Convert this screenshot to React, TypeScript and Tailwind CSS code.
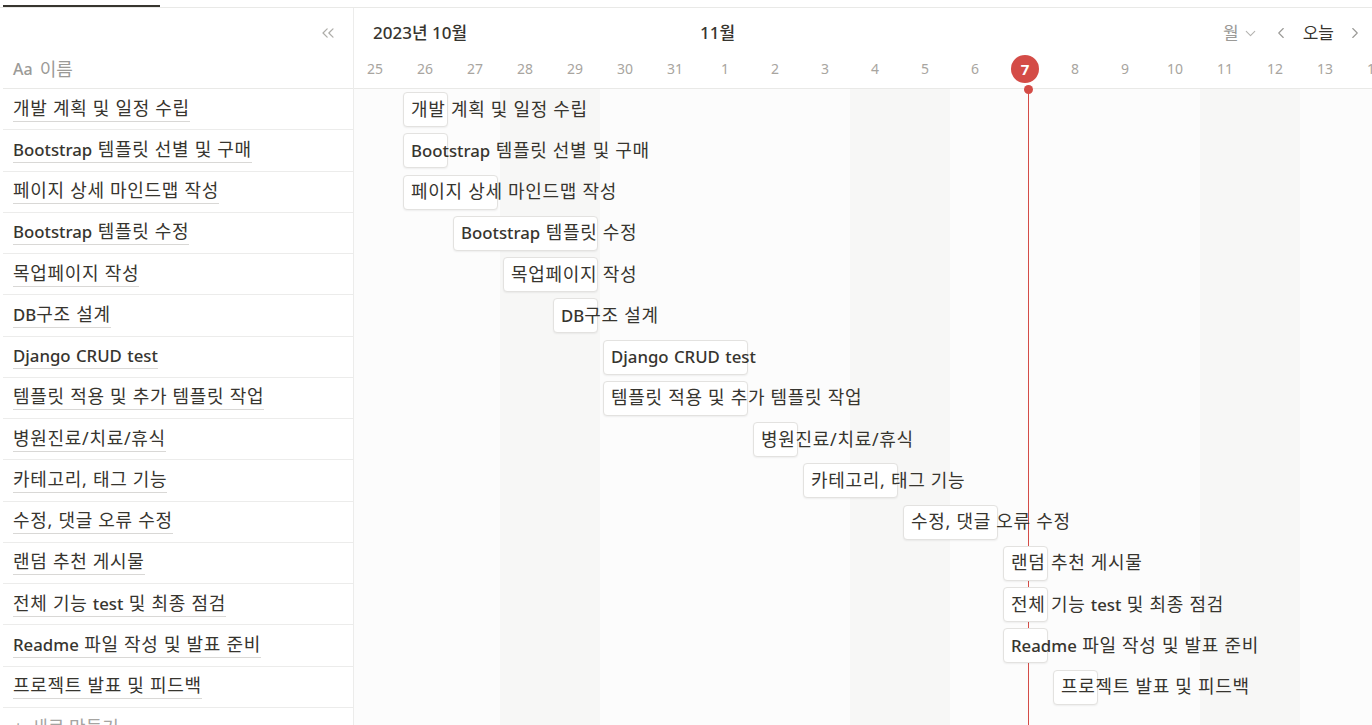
import { ChevronsLeft, ChevronDown, ChevronLeft, ChevronRight } from 'lucide-react';

const days = [25, 26, 27, 28, 29, 30, 31, 1, 2, 3, 4, 5, 6, 7, 8, 9, 10, 11, 12, 13, 14];
const weekends = [3, 4, 10, 11, 17, 18];
const todayIdx = 13;

interface Task {
  name: string;
  start: number;
  span: number;
}

const tasks: Task[] = [
  { name: '개발 계획 및 일정 수립', start: 1, span: 1 },
  { name: 'Bootstrap 템플릿 선별 및 구매', start: 1, span: 1 },
  { name: '페이지 상세 마인드맵 작성', start: 1, span: 2 },
  { name: 'Bootstrap 템플릿 수정', start: 2, span: 3 },
  { name: '목업페이지 작성', start: 3, span: 2 },
  { name: 'DB구조 설계', start: 4, span: 1 },
  { name: 'Django CRUD test', start: 5, span: 3 },
  { name: '템플릿 적용 및 추가 템플릿 작업', start: 5, span: 3 },
  { name: '병원진료/치료/휴식', start: 8, span: 1 },
  { name: '카테고리, 태그 기능', start: 9, span: 2 },
  { name: '수정, 댓글 오류 수정', start: 11, span: 2 },
  { name: '랜덤 추천 게시물', start: 13, span: 1 },
  { name: '전체 기능 test 및 최종 점검', start: 13, span: 1 },
  { name: 'Readme 파일 작성 및 발표 준비', start: 13, span: 1 },
  { name: '프로젝트 발표 및 피드백', start: 14, span: 1 },
];

// latin words render heavier and hangul wider in the original font
function Name({ text }: { text: string }) {
  const parts = text.split(/([A-Za-z]+)/);
  return (
    <>
      {parts.map((p, i) =>
        /^[A-Za-z]+$/.test(p) ? (
          <span key={i} className="font-medium text-[16.8px]">
            {p}
          </span>
        ) : (
          <span key={i} className="text-[18px] tracking-[0.7px]">
            {p}
          </span>
        )
      )}
    </>
  );
}

export default function App() {
  return (
    <div
      className="w-[1372px] h-[725px] overflow-hidden bg-white text-[#37352f] text-[16px]"
      style={{ fontFamily: '"Noto Sans", "Noto Sans CJK KR", sans-serif' }}
    >
      {/* top tab strip */}
      <div className="h-[8px] border-b border-[#e9e9e7] flex items-end">
        <div className="ml-[3px] w-[157px] h-[2px] bg-[#37352f]" />
      </div>

      <div className="flex h-[717px]">
        {/* left panel */}
        <div className="w-[354px] shrink-0 border-r border-[#ececeb] flex flex-col">
          <div className="ml-[3px] h-[81px] shrink-0 border-b border-[#e9e9e7] flex flex-col">
            <div className="h-[49px] flex items-center justify-end pr-[15px]">
              <ChevronsLeft className="w-[20px] h-[20px] text-[#aeada9]" strokeWidth={1.5} />
            </div>
            <div className="flex items-center pl-[10px] text-[#9b9a97] gap-[7px] h-[24px]">
              <span className="font-medium text-[16px]">Aa</span>
              <span className="text-[18px]">이름</span>
            </div>
          </div>
          {tasks.map((t) => (
            <div
              key={t.name}
              className="ml-[3px] h-[41.25px] shrink-0 border-b border-[#ececeb] flex items-center pl-[10px]"
            >
              <span className="leading-[23px] border-b border-[#d9d8d6] whitespace-nowrap">
                <Name text={t.name} />
              </span>
            </div>
          ))}
          <div className="ml-[3px] shrink-0 flex items-center pl-[10px] pt-[6px] text-[#a5a4a1] gap-[8px] text-[18px]">
            <span>+</span>
            <span>새로 만들기</span>
          </div>
        </div>

        {/* timeline */}
        <div className="flex-1 overflow-hidden flex flex-col">
          <div className="h-[81px] border-b border-[#e9e9e7] flex flex-col shrink-0">
            <div className="h-[48px] flex items-center pt-[2px]">
              <div className="w-[346px] pl-[19px] text-[17px] font-medium">2023년 10월</div>
              <div className="text-[17px] font-medium">11월</div>
              <div className="ml-auto flex items-center pr-[8px]">
                <span className="text-[#9b9a97] text-[17px]">월</span>
                <ChevronDown className="w-[17px] h-[17px] text-[#b4b3b0] ml-[3px]" strokeWidth={1.5} />
                <ChevronLeft className="w-[18px] h-[18px] text-[#9b9a97] ml-[13px]" strokeWidth={1.5} />
                <span className="ml-[13px] text-[17px]">오늘</span>
                <ChevronRight className="w-[18px] h-[18px] text-[#9b9a97] ml-[12px]" strokeWidth={1.5} />
              </div>
            </div>
            <div className="flex ml-[-4px] h-[32px] items-start">
              {days.map((d, i) => (
                <div key={i} className="w-[50px] shrink-0 flex justify-center">
                  {i === todayIdx ? (
                    <div className="w-[28px] h-[28px] -mt-[1px] rounded-full bg-[#d44c47] text-white font-bold text-[15px] flex items-center justify-center">
                      {d}
                    </div>
                  ) : (
                    <span className="text-[14px] text-[#a8a5a0] leading-[26px]">{d}</span>
                  )}
                </div>
              ))}
            </div>
          </div>

          <div className="relative flex-1 ml-[-4px]">
            {/* day column backgrounds */}
            <div className="absolute inset-0 flex">
              {days.map((d, i) => (
                <div
                  key={i}
                  className={`w-[50px] shrink-0 ${weekends.includes(i) ? 'bg-[#f7f7f6]' : 'bg-[#fcfcfc]'}`}
                />
              ))}
            </div>

            {/* today marker */}
            <div className="absolute top-0 bottom-0 left-[678px] w-[1px] bg-[#d44c47] z-10" />
            <div className="absolute top-[-4px] left-[674px] w-[9px] h-[9px] rounded-full bg-[#d44c47] z-10" />

            <div className="relative">
              {tasks.map((t) => (
                <div key={t.name} className="h-[41.25px] flex items-center">
                  <div
                    className="h-[35px] bg-white border border-[#e3e2e0] rounded-[4px] shadow-[0_1px_2px_rgba(15,15,15,0.06)] flex items-center pl-[7px] shrink-0 z-20"
                    style={{ marginLeft: t.start * 50 + 3, width: t.span * 50 - 5 }}
                  >
                    <span className="whitespace-nowrap relative z-20 leading-[23px]">
                      <Name text={t.name} />
                    </span>
                  </div>
                </div>
              ))}
            </div>
          </div>
        </div>
      </div>
    </div>
  );
}
